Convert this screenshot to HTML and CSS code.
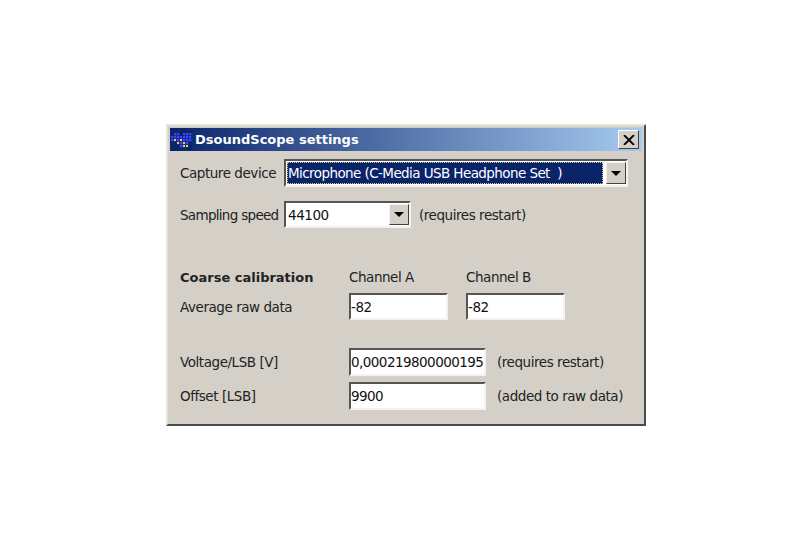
FILE: index.html
```html
<!DOCTYPE html>
<html lang="en">
<head>
  <meta charset="UTF-8" />
  <title>DsoundScope settings</title>
  <link rel="stylesheet" href="styles.css">
</head>
<body>
  <div class="window">
    <div class="titlebar">
      <svg class="app-icon" width="21" height="20" viewBox="0 0 21 20">
        <defs>
          <pattern id="dots" width="3" height="3" patternUnits="userSpaceOnUse">
            <rect width="3" height="3" fill="#1a2a9a"/>
            <rect width="2" height="2" fill="#3a48f5"/>
          </pattern>
        </defs>
        <rect width="21" height="20" fill="#0a2468"/>
        <path d="M3 3h6v3h3V3h9v9h-3v3h-3v3h-6v-3H6v-3H0V6h3z" fill="url(#dots)"/>
        <path d="M9 9h2v2H9zM6 12h2v2H6zM12 12h2v2h-2zM15 15h2v2h-2zM12 15h2v2h-2zM3 9h2v2H3z" fill="#e6d83a"/>
      </svg>
      <span class="title">DsoundScope settings</span>
      <button class="close"><svg width="12" height="10" viewBox="0 0 12 10"><path d="M1 0l10 10M11 0L1 10" fill="none" stroke="#000" stroke-width="1.800"/></svg></button>
    </div>
    <div class="content">
      <div class="row row-device">
        <label class="label label-short">Capture device</label>
        <div class="field combo combo-wide">
          <span class="combo-text selected"><span>Microphone (C-Media USB Headphone Set&nbsp; )</span></span>
          <span class="arrow-btn"></span>
        </div>
      </div>
      <div class="row row-speed">
        <label class="label label-short tight">Sampling speed</label>
        <div class="field combo combo-small">
          <span class="combo-text">44100</span>
          <span class="arrow-btn"></span>
        </div>
        <span class="note">(requires restart)</span>
      </div>
      <div class="row row-head">
        <span class="label label-long heading">Coarse calibration</span>
        <span class="channel">Channel A</span>
        <span class="channel">Channel B</span>
      </div>
      <div class="row row-raw">
        <label class="label label-long">Average raw data</label>
        <div class="field edit edit-small">-82</div>
        <div class="field edit edit-small">-82</div>
      </div>
      <div class="row row-volt">
        <label class="label label-long">Voltage/LSB [V]</label>
        <div class="field edit edit-wide">0,000219800000195</div>
        <span class="note">(requires restart)</span>
      </div>
      <div class="row row-offset">
        <label class="label label-long">Offset [LSB]</label>
        <div class="field edit edit-wide">9900</div>
        <span class="note">(added to raw data)</span>
      </div>
    </div>
  </div>
</body>
</html>
```

FILE: styles.css
```css
* {
  margin: 0;
  padding: 0;
  box-sizing: border-box;
}

body {
  background: #fff;
  padding: 124px 0 0 166px;
  font-family: "DejaVu Sans", sans-serif;
  font-size: 13.5px;
  letter-spacing: -0.45px;
  color: #222;
  white-space: nowrap;
}

.window {
  width: 480px;
  height: 302px;
  background: #d4d0c8;
  border: 2px solid;
  border-color: #e6e3dc #4a4a46 #4a4a46 #e6e3dc;
  padding: 2px;
}

.titlebar {
  height: 23px;
  display: flex;
  align-items: center;
  padding-right: 3px;
  background: linear-gradient(to right, #0a246a, #a6caf0);
}

.app-icon {
  margin-left: 1px;
  flex: none;
}

.title {
  margin-left: 3px;
  color: #fff;
  font-weight: 700;
  font-size: 13px;
  letter-spacing: 0;
  flex: 1;
}

.close {
  width: 21px;
  height: 19px;
  background: #d4d0c8;
  border: 1px solid;
  border-color: #fff #404040 #404040 #fff;
  display: flex;
  align-items: center;
  justify-content: center;
}

.content {
  padding: 8px 0 0 10px;
}

.row {
  display: flex;
  align-items: center;
}

.row-device { height: 28px; }
.row-speed { height: 27px; margin-top: 14px; }
.row-head { height: 18px; margin-top: 40px; }
.row-raw { height: 27px; margin-top: 7px; }
.row-volt { height: 28px; margin-top: 28px; }
.row-offset { height: 28px; margin-top: 6px; }

.label-short { width: 104px; }
.label-long { width: 169px; }

.tight {
  letter-spacing: -0.7px;
}

.heading {
  font-weight: 700;
  letter-spacing: 0;
  font-size: 13px;
}

.channel {
  width: 117px;
}

.field {
  height: 100%;
  background: #fff;
  border: 2px solid;
  border-color: #555 #f4f2ee #f4f2ee #555;
}

.combo {
  display: flex;
  align-items: center;
  padding: 1px 0 1px 1px;
  color: #111;
}

.combo-wide { width: 344px; }
.combo-small { width: 127px; }

.combo-text {
  flex: 1;
  height: 100%;
  display: flex;
  align-items: center;
  padding-left: 1px;
}

.selected {
  background: #0a246a;
  color: #fff;
  border: 1px dotted #d8c98a;
  margin-right: 3px;
  padding-left: 0;
  letter-spacing: -0.58px;
}

.arrow-btn {
  width: 20px;
  height: 100%;
  background: #d4d0c8;
  border: 1px solid;
  border-color: #f4f2ee #404040 #404040 #f4f2ee;
  display: flex;
  align-items: center;
  justify-content: center;
}

.arrow-btn::after {
  content: "";
  border-style: solid;
  border-width: 5px 5px 0;
  border-color: #000 transparent transparent;
}

.edit {
  display: flex;
  align-items: center;
  color: #111;
}

.edit-small { width: 99px; margin-right: 18px; }
.edit-wide { width: 137px; letter-spacing: -0.55px; }

.note {
  margin-left: 8px;
}

.row-volt .note,
.row-offset .note {
  margin-left: 11px;
}
```
